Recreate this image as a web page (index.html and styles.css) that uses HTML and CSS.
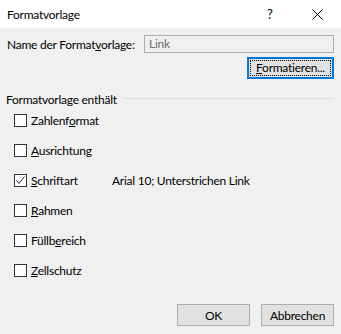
FILE: index.html
```html
<!doctype html>
<html>
	<head>
		<meta charset="utf-8">
		<title>Formatvorlage</title>
		<link rel="stylesheet" href="styles.css">
	</head>
	<body>
		<div class="dialog">
			<div class="titlebar">
				<span class="title">Formatvorlage</span>
				<span class="help">?</span>
				<span class="close">
					<svg width="11" height="11" viewBox="0 0 11 11"><path d="M0.5 0.5 L10.5 10.5 M10.5 0.5 L0.5 10.5" stroke="#000" stroke-width="1" fill="none"/></svg>
				</span>
			</div>
			<div class="content">
				<div class="name-row">
					<label class="name-label">Name der Format<u>v</u>orlage:</label>
					<div class="name-input">Link</div>
				</div>
				<div class="format-row">
					<button class="btn btn-focus"><span class="focus-ring"><u>F</u>ormatieren...</span></button>
				</div>
				<div class="group-head">
					<span>Formatvorlage enthält</span>
					<span class="group-line"></span>
				</div>
				<ul class="checks">
					<li class="check-row"><span class="box"></span><span>Zahlenf<u>o</u>rmat</span></li>
					<li class="check-row"><span class="box"></span><span><u>A</u>usrichtung</span></li>
					<li class="check-row">
						<span class="box"><svg width="11" height="11" viewBox="0 0 11 11"><path d="M1.5 5.5 L4 8.5 L9.5 1.5" stroke="#333" stroke-width="1" fill="none"/></svg></span>
						<span class="check-text"><u>S</u>chriftart</span>
						<span class="desc">Arial 10; Unterstrichen Link</span>
					</li>
					<li class="check-row"><span class="box"></span><span><u>R</u>ahmen</span></li>
					<li class="check-row"><span class="box"></span><span>Füllb<u>e</u>reich</span></li>
					<li class="check-row"><span class="box"></span><span><u>Z</u>ellschutz</span></li>
				</ul>
				<div class="footer">
					<button class="btn btn-foot">OK</button>
					<button class="btn btn-foot">Abbrechen</button>
				</div>
			</div>
		</div>
	</body>
</html>
```
FILE: styles.css
```css
* { margin: 0; padding: 0; box-sizing: border-box; }
html, body { height: 100%; }
body {
	font-family: Lato, "Noto Sans", sans-serif;
	font-size: 12px;
	letter-spacing: -0.25px;
	color: #000;
	background: #f0f0f0;
	white-space: nowrap;
}
u { text-underline-offset: 1px; }

.dialog {
	width: 341px;
	height: 334px;
	display: flex;
	flex-direction: column;
}
.titlebar {
	height: 28px;
	background: #fff;
	display: flex;
	align-items: center;
	padding-left: 7px;
}
.title { flex: 1; }
.help { width: 10px; margin-right: 35px; font-size: 13px; }
.close { width: 11px; margin-right: 18px; display: flex; }

.content {
	flex: 1;
	display: flex;
	flex-direction: column;
	padding: 0 7px 8px 7px;
}
.name-row {
	display: flex;
	align-items: center;
	margin-top: 7px;
	height: 18px;
}
.name-input {
	margin-left: auto;
	width: 190px;
	height: 18px;
	border: 1px solid #adadad;
	background: #f0f0f0;
	color: #6d6d6d;
	padding-left: 4px;
	line-height: 16px;
}
.format-row {
	display: flex;
	justify-content: flex-end;
	margin-top: 4px;
}
.btn {
	font-family: inherit;
	font-size: 12px;
	letter-spacing: inherit;
	color: #000;
	background: #e1e1e1;
	border: 1px solid #adadad;
	height: 22px;
}
.btn-focus {
	width: 87px;
	border: 2px solid #0078d7;
	padding: 1px;
	display: flex;
}
.focus-ring {
	flex: 1;
	border: 1px dotted #000;
	line-height: 14px;
}

.group-head {
	display: flex;
	align-items: center;
	margin-top: 16px;
	height: 10px;
	line-height: 10px;
	margin-left: -1px;
}
.group-line {
	flex: 1;
	height: 1px;
	background: #dcdcdc;
	margin-left: 6px;
	margin-top: -3px;
}

.checks { list-style: none; }
.check-row {
	height: 30px;
	display: flex;
	align-items: center;
	padding-left: 7px;
}
.box {
	width: 13px;
	height: 13px;
	border: 1px solid #333;
	background: #fff;
	margin-right: 4px;
	display: flex;
}
.check-text { width: 81px; }

.footer {
	margin-top: auto;
	display: flex;
	justify-content: flex-end;
	gap: 11px;
}
.btn-foot { width: 73px; }
```
